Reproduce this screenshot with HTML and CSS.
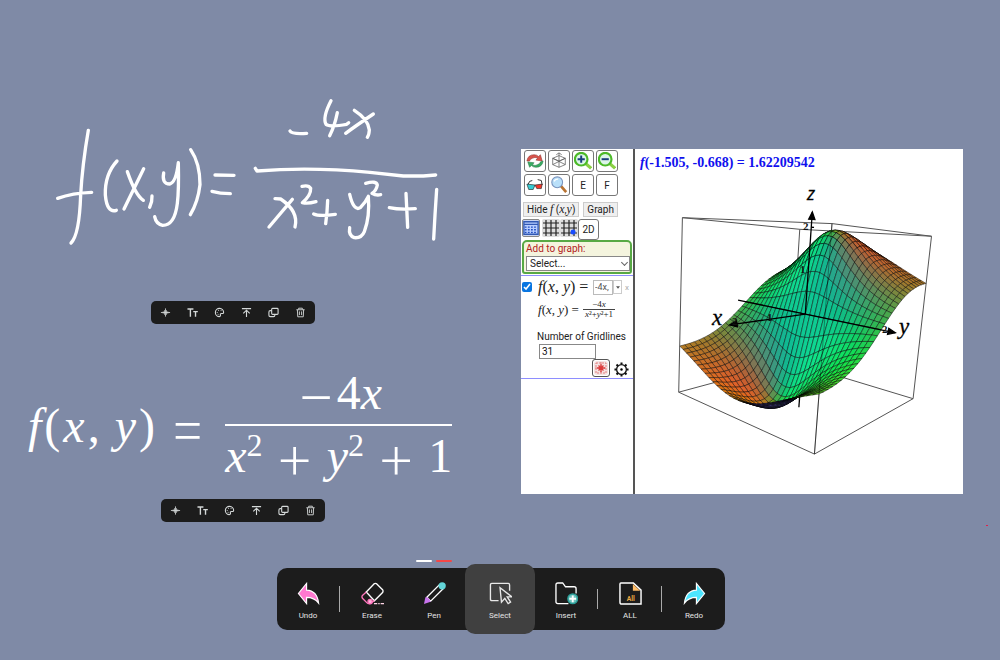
FILE: index.html
```html
<!DOCTYPE html>
<html lang="en">
<head>
<meta charset="utf-8">
<title>Whiteboard</title>
<link rel="stylesheet" href="styles.css">
</head>
<body>
<svg class="sprite" width="0" height="0" aria-hidden="true">
  <symbol id="wave" viewBox="0 0 12 12"><path d="M1 6h10M3.500 4.800v2.400M5 3.500v5M6 1.500v9M7 3.500v5M8.500 4.800v2.400" fill="none" stroke="currentColor" stroke-width=".9"/></symbol>
  <symbol id="type" viewBox="0 0 12 12"><path d="M.5 2.200h6.500M3.700 2v8.500M6.800 5h5M9.300 5v5.500" fill="none" stroke="currentColor" stroke-width="1.500"/></symbol>
  <symbol id="palette" viewBox="0 0 12 12"><path d="M5.500 10.500A4.500 4.500 0 1 1 10.500 6c0 1-1 1.300-2 1.100-1.500-.2-1.800.6-1.500 1.600.3 1-.5 1.900-1.500 1.800z" fill="none" stroke="currentColor" stroke-width="1.200"/><path d="M3 6h1M4.500 3.700h1M7.200 3.900h1M4 8h1" stroke="currentColor"/></symbol>
  <symbol id="top" viewBox="0 0 12 12"><path d="M1 1.800h10M6 11V3.500M2.500 7 6 3.500 9.500 7" fill="none" stroke="currentColor" stroke-width="1.200"/></symbol>
  <symbol id="copy" viewBox="0 0 12 12"><rect x="4" y="1.500" width="7" height="6.500" rx="1" fill="none" stroke="currentColor" stroke-width="1.200"/><path d="M4 4H2.500Q1 4 1 5.500v3.500q0 1.500 1.500 1.500H6Q7.500 10.500 7.500 9V8" fill="none" stroke="currentColor" stroke-width="1.200"/></symbol>
  <symbol id="trash" viewBox="0 0 12 12"><path d="M1.500 3h9M4 2.800V1.300h4v1.500M2.600 3l.4 7.700h6L9.400 3M4.800 4.800v4M7.200 4.800v4" fill="none" stroke="currentColor"/></symbol>
</svg>

<main class="board">
  <svg class="ink" viewBox="40 80 420 180" role="img" aria-label="Handwritten formula">
    <g transform="translate(40 80) scale(.33333)">
      <path d="M145 151Q127 255 122 345Q118 465 93 489M53 355Q98 339 155 337"/>
      <path d="M231 243Q194 283 196 345Q201 400 229 391M262 275Q287 347 310 361M311 266Q279 332 252 387M336 348Q337 366 329 382"/>
      <path d="M371 279Q365 312 389 312Q408 308 415 248Q417 330 412 370Q404 436 368 436Q348 432 344 410M452 209Q480 250 480 314Q474 366 451 404M525 285 582 286M516 334Q540 341 571 341"/>
      <path d="M750 153Q755 163 800 160M873 62Q847 112 858 133Q870 142 920 133L926 128M892 98Q884 138 869 167M943 91Q985 118 988 150Q987 166 982 172M1000 102Q945 139 917 160"/>
      <path d="M646 265 651 273Q810 260 990 277L1090 288H1150L1187 285"/>
      <path d="M705 356 722 357Q777 394 765 441M757 358Q730 390 687 441M786 319Q806 314 812 325Q813 346 787 368Q803 372 828 365M821 402Q838 410 886 403M863 361Q862 395 857 431"/>
      <path d="M929 343Q941 395 961 383Q978 365 985 349Q990 410 973 455Q965 475 943 473Q925 466 929 443M977 310Q1009 301 1012 315Q1009 332 996 340Q1008 347 1022 344M1048 383Q1080 390 1126 386M1098 340 1103 442M1190 328Q1185 400 1181 477"/>
    </g>
  </svg>

  <div class="tools tools-ink">
    <button aria-label="Convert"><svg><use href="#wave"/></svg></button><button aria-label="Text"><svg><use href="#type"/></svg></button><button aria-label="Colour"><svg><use href="#palette"/></svg></button><button aria-label="To front"><svg><use href="#top"/></svg></button><button aria-label="Copy"><svg><use href="#copy"/></svg></button><button aria-label="Delete"><svg><use href="#trash"/></svg></button>
  </div>

  <div class="formula">
    <span class="lhs"><i>f</i><span class="paren">(</span><i>x</i><span class="comma">,</span><i>y</i><span class="paren">)</span></span>
    <span class="sign equals">=</span>
    <span class="fraction">
      <span class="numerator"><span class="sign">−</span>4<i>x</i></span>
      <span class="denominator"><span><i>x</i><sup>2</sup></span><span class="sign">+</span><span><i>y</i><sup>2</sup></span><span class="sign">+</span><span>1</span></span>
    </span>
  </div>

  <div class="tools tools-formula">
    <button aria-label="Convert"><svg><use href="#wave"/></svg></button><button aria-label="Text"><svg><use href="#type"/></svg></button><button aria-label="Colour"><svg><use href="#palette"/></svg></button><button aria-label="To front"><svg><use href="#top"/></svg></button><button aria-label="Copy"><svg><use href="#copy"/></svg></button><button aria-label="Delete"><svg><use href="#trash"/></svg></button>
  </div>

  <section class="grapher">
    <div class="side">
      <div class="keys">
        <button class="key" aria-label="Reset"><svg viewBox="0 0 20 20"><path d="M1 10Q2 3 9 3q3 0 5 2l2-2 2 7-7-1 2-2Q10 5 7 7 4 8 4 10z" fill="#d9534b" stroke="#8c302d" stroke-width=".6"/><path d="M19 10q-1 7-8 7-3 0-5-2l-2 2-2-6 7 1-2 2q3 2 6 0 3-1 3-3z" fill="#38ad62" stroke="#257445" stroke-width=".6"/></svg></button>
        <button class="key" aria-label="Rotate"><svg viewBox="0 0 20 20" fill="none" stroke="#555" stroke-width=".8"><path d="m3 7 7-3 7 3v7l-7 3-7-3zM3 7l7 3 7-3M10 1v16M3 14l14-7M3 7l14 7M7 3l3-2 3 2"/></svg></button>
        <button class="key" aria-label="Zoom in"><svg viewBox="0 0 20 20"><path d="m12 12 7 6" stroke="#8bd045" stroke-width="3.500"/><circle cx="8" cy="8" r="7" fill="#dcf5e9" stroke="#4cba28" stroke-width="2.400"/><path d="M4 8h8M8 4v8" stroke="#173e7c" stroke-width="2.200"/></svg></button>
        <button class="key" aria-label="Zoom out"><svg viewBox="0 0 20 20"><path d="m12 12 7 6" stroke="#8bd045" stroke-width="3.500"/><circle cx="8" cy="8" r="7" fill="#dcf5e9" stroke="#4cba28" stroke-width="2.400"/><path d="M4 8h8" stroke="#173e7c" stroke-width="2.200"/></svg></button>
        <button class="key" aria-label="3D glasses"><svg viewBox="0 0 20 20"><path d="M2 10 4 6l3-1M18 10l-1-5-4-1" fill="none" stroke="#222"/><path d="m1 9 9 1-2 5H3z" fill="#36cbd3" stroke="#222" stroke-width=".7"/><path d="m10 10 8-1-1 5h-5z" fill="#f23428" stroke="#222" stroke-width=".7"/></svg></button>
        <button class="key" aria-label="Inspect"><svg viewBox="0 0 20 20"><path d="m12 11 6 7" stroke="#b87331" stroke-width="3"/><circle cx="8" cy="7" r="6" fill="#b9e0fa" stroke="#7893bd" stroke-width="1.200"/><path d="M4.500 6Q6 3 9 3.500" stroke="#fff" stroke-width="1.500" fill="none"/></svg></button>
        <button class="key">E</button>
        <button class="key">F</button>
      </div>
      <div class="row"><button class="flat">Hide <i>f</i> (<i>x</i>,<i>y</i>)</button><button class="flat">Graph</button></div>
      <div class="row grids">
        <button class="grid-key picked" aria-label="Domain"><svg viewBox="0 0 18 18"><path d="M1 2h16v14H1zM1 5h16" fill="#b9ceff" stroke="#3158b3" stroke-width="1.500"/><path d="M2 8h14M2 11h14M2 14h14" stroke="#214fc3" stroke-width="1.500" stroke-dasharray="2 1.500"/></svg></button><button class="grid-key" aria-label="Grid"><svg viewBox="0 0 18 18"><path d="M1 4h16M1 9h16M1 14h16M4 1v16M9 1v16M14 1v16" stroke="#222" stroke-width="1.200"/></svg></button><button class="grid-key" aria-label="Grid point"><svg viewBox="0 0 18 18"><path d="M1 4h16M1 9h16M1 14h16M4 1v16M9 1v16M14 1v16" stroke="#222" stroke-width="1.200"/><circle cx="13" cy="13" r="2.500" fill="#184cff"/></svg></button><button class="key two">2D</button>
      </div>
      <div class="adder"><label for="add">Add to graph:</label><div class="picker"><select id="add"><option>Select...</option></select></div></div>
      <div class="entry">
        <div class="entry-line"><input type="checkbox" checked aria-label="Show function"><span class="math"><i>f</i>(<i>x</i>, <i>y</i>) =</span><input class="expression" type="text" value="-4x," aria-label="Expression"><button class="drop" aria-label="Options"><svg viewBox="0 0 6 4"><path d="M0 0h6L3 4z" fill="#555"/></svg></button><button class="close" aria-label="Remove">x</button></div>
        <div class="preview"><span><i>f</i>(<i>x</i>, <i>y</i>) =</span><span class="small-fraction"><span>−4<i>x</i></span><span><i>x</i>²+<i>y</i>²+1</span></span></div>
        <label class="lines-label" for="lines">Number of Gridlines</label>
        <input id="lines" class="lines" type="text" value="31">
        <div class="options">
          <button class="color-key" aria-label="Surface colour"><svg viewBox="0 0 16 16"><rect x="1" y="1" width="14" height="14" rx="3" fill="#f3e2e2"/><path d="M3 3h10v10H3zM8 2v12M2 8h12" fill="none" stroke="#e58080" stroke-dasharray="2 1"/><path d="M8 4v8M4 8h8M5.500 5.500l5 5M10.500 5.500l-5 5" stroke="#dc3b3b" stroke-width="1.300"/></svg></button>
          <button class="gear" aria-label="Settings"><svg viewBox="0 0 16 16"><path d="M8 .5v2M8 13.500v2M.5 8h2M13.500 8h2M2.700 2.700 4.200 4.200M11.800 11.800l1.500 1.500M13.300 2.700l-1.500 1.500M4.200 11.800l-1.500 1.500" stroke="#111" stroke-width="2.200"/><circle cx="8" cy="8" r="5.200" fill="#fff" stroke="#111" stroke-width="1.400"/><circle cx="8" cy="8" r="1.300"/></svg></button>
        </div>
      </div>
    </div>
    <div class="view">
      <output class="readout"><i>f</i>(-1.505, -0.668) = 1.62209542</output>
      <svg class="plot" viewBox="635 180 328 300" role="img" aria-label="Surface plot">
        <g id="box-back" class="box"></g>
        <g id="surface" class="surface"></g>
        <g id="box-front" class="box"></g>
        <g id="edge" class="edge"></g>
        <g id="axes" class="axes"></g>
        <text x="807" y="200" class="axis-name axis-up">z</text>
        <text x="712" y="325" class="axis-name">x</text>
        <text x="899" y="334" class="axis-name">y</text>
        <text x="803" y="230" class="tick">2</text>
        <text x="800" y="273" class="tick">1</text>
        <text x="767" y="321" class="tick">1</text>
        <text x="732" y="325" class="tick">2</text>
        <text x="882" y="333" class="tick">2</text>
      </svg>
    </div>
  </section>
  <span class="dot"></span>
</main>

<footer class="dock">
  <div class="pages"><span class="page"></span><span class="page current"></span></div>
  <nav class="bar">
    <button><svg viewBox="0 0 24 24"><path d="M10 1.500v7Q21 9 22.500 22 18 16 10 16v6.500L1.500 12z" fill="#ff78d0" stroke="#fff" stroke-width="1.200"/></svg>Undo</button>
    <span class="divider"></span>
    <button><svg viewBox="0 0 24 24" fill="none" stroke="#fff" stroke-width="1.400"><path d="m5.500 10.500 8-8.500q1.500-1 3 0l6 6q1 1.500 0 3L14 19.500z"/><path d="M5.500 10.500 1.500 14q-1 1.500 0 3L6 21.500q1.500 1.500 3 1l5-3" stroke="#ff76bd"/><circle cx="9.500" cy="20.500" r="2.200" fill="#ffb7df" stroke="#ff76bd"/><path d="M13.500 22.500H24" stroke="#ffd5e6" stroke-dasharray="3.500 1 1.500 1"/></svg>Erase</button>
    <button><svg viewBox="0 0 24 24"><path d="M4 16 17 3l4 4L8 20z" fill="#1c1c1c" stroke="#fff" stroke-width="1.400"/><path d="m1 23 1.500-7q3-1 5.500 4.500z" fill="#c873ed"/><circle cx="20" cy="4" r="3.800" fill="#62d5d8"/></svg>Pen</button>
    <button class="active"><svg viewBox="0 0 24 24" fill="none" stroke="#e8e8e8" stroke-width="1.400"><path d="M10 19.500H3q-1.500 0-1.500-1.500V3Q1.500 1.500 3 1.500h17q1.500 0 1.500 1.500v6"/><path d="m11.500 6 1.500 15 3.500-4 3.500 5.500 2.500-1.500-3.500-5.500h5z" fill="#404040"/></svg>Select</button>
    <button><svg viewBox="0 0 24 24"><path d="M14 22.500H3q-2 0-2-2V3q0-2 2-2h5l3 4h9q2 0 2 2v5" fill="none" stroke="#fff" stroke-width="1.400"/><circle cx="18.500" cy="17.500" r="5.800" fill="#2c9e98"/><circle cx="18.500" cy="17.500" r="4.200" fill="#6fc4bf"/><path d="M15 17.500h7M18.500 14v7" stroke="#fff" stroke-width="2"/></svg>Insert</button>
    <span class="divider short"></span>
    <button><svg viewBox="0 0 24 24"><path d="M2 1h13l8 7.500V23H3q-2 0-2-2V2q0-1 1-1z" fill="none" stroke="#fff" stroke-width="1.500"/><path d="M14.500 2v7H22z" fill="#ffbd69"/><text x="8" y="20" class="all-mark">All</text></svg>ALL</button>
    <span class="divider"></span>
    <button><svg viewBox="0 0 24 24"><path d="M14 1.500v7Q3 9 1.500 22 6 16 14 16v6.500L22.500 12z" fill="#4de5ff" stroke="#fff" stroke-width="1.200"/></svg>Redo</button>
  </nav>
</footer>
<script src="plot.js"></script>
</body>
</html>
```
FILE: styles.css
```css
* { box-sizing: border-box; }
body { margin: 0; min-height: 100vh; background: #7f8aa6; font-family: Roboto, sans-serif; display: flex; flex-direction: column; overflow: hidden; }
button { margin: 0; padding: 0; border: 0; background: none; color: inherit; font-family: inherit; }
.sprite { position: absolute; }
.board { flex: 1; }

/* Objects placed freely on the board */
.ink { position: absolute; left: 40px; top: 80px; width: 420px; fill: none; stroke: #fff; stroke-width: 10; stroke-linecap: round; stroke-linejoin: round; }
.tools { position: absolute; display: flex; padding: 0 1px; height: 23px; border-radius: 5px; background: #1c1c1c; color: #d4d8d8; }
.tools-ink { left: 151px; top: 301px; }
.tools-formula { left: 161px; top: 499px; }
.tools button { width: 27px; display: grid; place-items: center; }
.tools svg { width: 11px; height: 11px; }

.formula { position: absolute; left: 28px; top: 366px; display: flex; align-items: center; color: #fff; font: 48px/56px "Liberation Serif", serif; }
.lhs { display: flex; gap: 3px; }
.comma { margin-right: 12px; }
.sign { font-family: Inter, Lato, sans-serif; font-size: 64px; font-weight: 200; }
.equals { margin: 0 17px 0 12px; }
.fraction { display: flex; flex-direction: column; }
.numerator { display: flex; justify-content: center; padding-bottom: 4px; line-height: 54px; }
.denominator { display: flex; justify-content: space-between; width: 227px; border-top: 2px solid #fff; line-height: 60px; }
.denominator sup { font-size: 32px; line-height: 0; vertical-align: 16px; }

/* Graphing window */
.grapher { position: absolute; left: 521px; top: 149px; width: 442px; height: 345px; display: flex; overflow: hidden; background: #fff; color: #222; }
.side { width: 114px; border-right: 2px solid #555; }
.keys { display: grid; grid-template-columns: repeat(4, 22px); gap: 2px; padding: 1px 3px; }
.key { height: 22px; display: grid; place-items: center; border: 1px solid #777; border-radius: 3px; background: #fff; font-size: 10px; }
.key svg { width: 18px; height: 18px; }
.row { display: flex; gap: 4px; padding: 5px 2px 0; }
.flat { height: 15px; padding: 0 3px; border: 1px solid #ccc; background: #efefef; font-size: 10px; line-height: 13px; white-space: nowrap; }
.flat i { font-family: "Liberation Serif", serif; font-size: 12px; }
.grids { gap: 0; padding: 2px 0 0 1px; }
.grid-key { width: 18px; height: 18px; background: #ddd; border-radius: 2px; }
.grid-key svg { display: block; width: 18px; height: 18px; }
.picked { margin-right: 2px; background: #c8d3f0; border: 1px solid #888; }
.picked svg { width: 16px; height: 16px; }
.two { width: 21px; height: 21px; }
.adder { height: 34px; margin: 0 1px; padding: 0 0 0 2px; border: 2px solid #58a945; border-radius: 5px 5px 3px 3px; background: #f4f4de; }
.adder label { display: block; color: #b22222; font-size: 10px; line-height: 14px; }
.picker { position: relative; }
.picker::after { content: ""; position: absolute; right: 3px; top: 4px; width: 4px; height: 4px; border: solid #666; border-width: 0 1px 1px 0; transform: rotate(45deg); }
.adder select { display: block; appearance: none; width: 100%; height: 15px; padding: 0 3px; border: 1px solid #888; background: #fff; font: 10px/13px Roboto, sans-serif; color: #222; }
.entry { margin-top: 1px; padding: 2px 0 1px 1px; border: solid #8e8eff; border-width: 1px 0; }
.entry-line { display: flex; align-items: center; height: 18px; }
.entry-line input[type="checkbox"] { width: 10px; height: 10px; margin: 0 6px 0 0; accent-color: #0875e1; }
.math { width: 55px; font: 16px/18px "Liberation Serif", serif; white-space: nowrap; }
.expression { width: 20px; height: 15px; padding: 0 1px; border: 1px solid #bbb; font: 9px Roboto, sans-serif; color: #555; }
.drop { width: 9px; height: 14px; display: grid; place-items: center; border: 1px solid #ccc; }
.drop svg { width: 4px; height: 3px; }
.close { margin-left: 3px; color: #aaa; font-size: 8px; }
.preview { display: flex; gap: 4px; align-items: center; padding-left: 16px; height: 27px; font: 13px "Liberation Serif", serif; white-space: nowrap; }
.small-fraction { display: flex; flex-direction: column; font-size: 9px; line-height: 9px; text-align: center; }
.small-fraction span + span { padding: 0 2px; border-top: 1px solid #444; }
.lines-label { display: block; padding: 6px 0 0 15px; font-size: 10px; line-height: 15px; white-space: nowrap; }
.lines { display: block; width: 57px; height: 15px; margin-left: 17px; padding: 0 2px; border: 1px solid #888; font: 10px Roboto, sans-serif; color: #111; }
.options { display: flex; gap: 4px; padding-left: 70px; height: 18px; }
.color-key { width: 18px; height: 18px; border: 1px solid #555; border-radius: 3px; }
.color-key svg { display: block; width: 16px; height: 16px; }
.gear { padding-top: 3px; }
.gear svg { display: block; width: 15px; height: 15px; }
.view { flex: 1; display: flex; flex-direction: column; }
.readout { display: block; height: 31px; padding: 6px 5px 0; color: #1010ee; font: bold 14px/16px "Liberation Serif", serif; white-space: nowrap; }
.plot { display: block; width: 100%; height: 300px; }
.box { fill: none; stroke: #555; stroke-width: 1; }
.edge { stroke: #000; stroke-width: 1; stroke-opacity: .35; }
.surface { stroke: rgba(0, 0, 0, .75); stroke-width: .6; stroke-linejoin: round; }
.axes { stroke: #000; stroke-width: 1.3; }
.axis-name { font: italic 23px "Liberation Serif", serif; fill: #000; stroke: #000; stroke-width: .3; }
.axis-up { font: italic 18px "Open Sans", sans-serif; }
.tick { font: bold 11px "Liberation Serif", serif; fill: #111; }
.dot { position: absolute; left: 986px; top: 525px; width: 2px; height: 1px; background: #e0204c; }

/* Bottom dock */
.dock { display: flex; flex-direction: column; align-items: center; padding: 0 0 30px 2px; }
.pages { display: flex; gap: 4px; padding-right: 134px; margin-bottom: 6px; }
.page { width: 16px; height: 2px; border-radius: 1px; background: #fff; }
.current { background: #f54646; }
.bar { display: flex; align-items: center; height: 62px; border-radius: 10px; background: #1c1c1c; color: #e4e4e4; }
.bar button { width: 62px; height: 62px; padding-top: 4px; display: flex; flex-direction: column; align-items: center; justify-content: center; gap: 6px; font-size: 8px; line-height: 10px; }
.bar button svg { width: 23px; height: 23px; }
.bar .active { width: 70px; height: 70px; border-radius: 10px; background: #404040; }
.divider { width: 1px; height: 26px; margin-right: 1px; background: #aaa; }
.short { height: 20px; }
.all-mark { font: bold 7px Roboto, sans-serif; fill: #eba844; }
```
FILE: plot.js
```js
const NS = "http://www.w3.org/2000/svg";
const f = (x, y) => -4 * x / (x * x + y * y + 1);

// Perspective projection of the cube [-2, 2]^3
function project(x, y, z) {
  x /= 2; y /= 2; z /= 2;
  const w = 1 - 0.1555 * x - 0.122 * y - 0.032 * z;
  return [
    (805.3 - 179.2 * x - 31.6 * y - 20 * z) / w,
    (314.1 - 41.1 * x - 24.5 * y - 94.1 * z) / w,
    w
  ];
}

function add(group, tag, attrs) {
  const node = document.createElementNS(NS, tag);
  for (const key in attrs) node.setAttribute(key, attrs[key]);
  document.getElementById(group).appendChild(node);
}

function line(group, a, b) {
  const p = project(...a), q = project(...b);
  add(group, "line", { x1: p[0], y1: p[1], x2: q[0], y2: q[1] });
}

function shade(x, y) {
  const d = (x * x + y * y + 1) ** 2;
  const fx = -4 * (y * y - x * x + 1) / d, fy = 8 * x * y / d;
  const n = Math.hypot(fx, fy, 1);
  const nx = -fx / n, ny = -fy / n;
  return [
    145 + 110 * ny - 150 * nx,
    165 - 115 * ny + 35 * nx,
    20 + 135 * nx * Math.abs(nx) + 40 * Math.abs(ny)
  ].map(v => Math.round(Math.max(15, Math.min(225, v))));
}

const cells = [];
const N = 30, step = 4 / N;
for (let i = 0; i < N; i++) {
  for (let j = 0; j < N; j++) {
    const x = -2 + i * step, y = -2 + j * step;
    const pts = [[x, y], [x + step, y], [x + step, y + step], [x, y + step]]
      .map(([u, v]) => project(u, v, f(u, v)));
    let area = 0;
    pts.forEach((p, k) => {
      const q = pts[(k + 1) % 4];
      area += p[0] * q[1] - q[0] * p[1];
    });
    const color = area < 0 ? shade(x + step / 2, y + step / 2) : [80, 70, 155];
    cells.push({ pts, color, depth: pts.reduce((s, p) => s + p[2], 0) });
  }
}
cells.sort((a, b) => b.depth - a.depth);
for (const cell of cells) {
  add("surface", "polygon", {
    points: cell.pts.map(p => p[0].toFixed(2) + "," + p[1].toFixed(2)).join(" "),
    fill: "rgb(" + cell.color.join(",") + ")"
  });
}

for (const [a, b] of [
  [[-2, -2, -2], [-2, -2, 2]], [[-2, -2, -2], [2, -2, -2]], [[-2, -2, -2], [-2, 2, -2]],
  [[-2, -2, 2], [2, -2, 2]], [[-2, -2, 2], [-2, 2, 2]],
  [[2, 2, -2], [2, 2, 2]]
]) line("box-back", a, b);
line("edge", [2, 2, -2], [2, 2, 2]);
for (const [a, b] of [
  [[2, -2, -2], [2, -2, 2]], [[-2, 2, -2], [-2, 2, 2]],
  [[2, 2, 2], [2, -2, 2]], [[2, 2, 2], [-2, 2, 2]],
  [[2, 2, -2], [2, -2, -2]], [[2, 2, -2], [-2, 2, -2]]
]) line("box-front", a, b);

function arrow(from, tip) {
  line("axes", from, tip);
  const p = project(...from), q = project(...tip);
  const angle = Math.atan2(q[1] - p[1], q[0] - p[0]);
  const at = (turn, r) => [q[0] - r * Math.cos(angle + turn), q[1] - r * Math.sin(angle + turn)];
  add("axes", "polygon", { points: [[q[0], q[1]], at(0.4, 8), at(-0.4, 8)].join(" ") });
}
arrow([0, 0, 0], [2.3, 0, 0]);
arrow([0, -2.3, 0], [0, 2.32, 0]);
arrow([0, 0, 0], [0, 0, 2.34]);
line("axes", [0, 0, 2], [0, 0.08, 2]);
line("axes", [0, 0, -2.02], [0, 0, -2.3]);
```
